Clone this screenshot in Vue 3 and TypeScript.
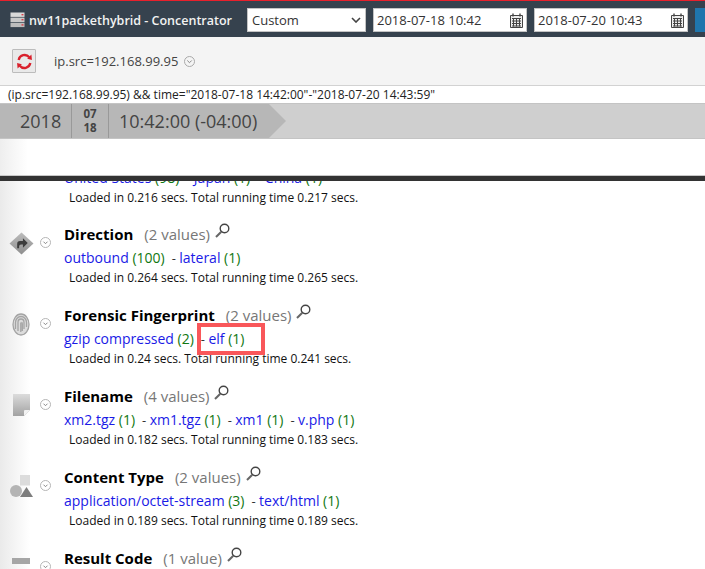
<script setup lang="ts">
interface Val { name: string; count: number }
interface Row { title: string; tail: string; icon: string; vals: Val[]; loaded: string; total: string }
const stub: Val[] = [{ name: 'United States', count: 98 }, { name: 'Japan', count: 1 }, { name: 'China', count: 1 }]
const rows: Row[] = [
  { title: 'Direction', tail: '(2 values)', icon: 'dir', vals: [{ name: 'outbound', count: 100 }, { name: 'lateral', count: 1 }], loaded: '0.264', total: '0.265' },
  { title: 'Forensic Fingerprint', tail: '(2 values)', icon: 'finger', vals: [{ name: 'gzip compressed', count: 2 }, { name: 'elf', count: 1 }], loaded: '0.24', total: '0.241' },
  { title: 'Filename', tail: '(4 values)', icon: 'file', vals: [{ name: 'xm2.tgz', count: 1 }, { name: 'xm1.tgz', count: 1 }, { name: 'xm1', count: 1 }, { name: 'v.php', count: 1 }], loaded: '0.182', total: '0.183' },
  { title: 'Content Type', tail: '(2 values)', icon: 'shapes', vals: [{ name: 'application/octet-stream', count: 3 }, { name: 'text/html', count: 1 }], loaded: '0.189', total: '0.189' },
  { title: 'Result Code', tail: '(1 value)', icon: 'bar', vals: [], loaded: '', total: '' },
]
</script>

<template>
  <div class="page">
    <header class="top">
      <svg class="srv" width="15" height="16" viewBox="0 0 15 16">
        <rect x="0.5" y="0.5" width="14" height="4.4" fill="#d9d9d9" />
        <rect x="0.5" y="5.6" width="14" height="4.4" fill="#c9c9c9" />
        <rect x="0.5" y="10.7" width="14" height="4.4" fill="#bdbdbd" />
        <rect x="11.5" y="2" width="2" height="1.4" fill="#d8404a" />
        <rect x="11.5" y="7" width="2" height="1.4" fill="#d8404a" />
        <rect x="11.5" y="12.2" width="2" height="1.4" fill="#d8404a" />
      </svg>
      <span class="brand">nw11packethybrid - Concentrator</span>
      <div class="field sel">
        <span>Custom</span>
        <svg width="10" height="6" viewBox="0 0 10 6"><path d="M1 1l4 4 4-4" fill="none" stroke="#444" stroke-width="1.6" /></svg>
      </div>
      <div class="field date">
        <span>2018-07-18 10:42</span>
        <svg width="13" height="15" viewBox="0 0 13 15"><path d="M.5 2.5h12v12H.5z" fill="#eee" stroke="#444" /><path d="M3 .5v3M10 .5v3" stroke="#444" stroke-width="1.4" /><path d="M2 5.5h9M2 8h9M2 10.5h9M2 13h9M3.5 5v8.5M6.5 5v8.5M9.5 5v8.5" stroke="#444" stroke-width="1" /></svg>
      </div>
      <div class="field date">
        <span>2018-07-20 10:43</span>
        <svg width="13" height="15" viewBox="0 0 13 15"><path d="M.5 2.5h12v12H.5z" fill="#eee" stroke="#444" /><path d="M3 .5v3M10 .5v3" stroke="#444" stroke-width="1.4" /><path d="M2 5.5h9M2 8h9M2 10.5h9M2 13h9M3.5 5v8.5M6.5 5v8.5M9.5 5v8.5" stroke="#444" stroke-width="1" /></svg>
      </div>
      <div class="go"></div>
    </header>

    <div class="tools">
      <button class="refresh">
        <svg width="17" height="17" viewBox="0 0 16 16">
          <path d="M2.5 6.5A5.7 5.7 0 0 1 12.5 4" fill="none" stroke="#d9202c" stroke-width="2.2" />
          <path d="M13.5 9.5A5.7 5.7 0 0 1 3.5 12" fill="none" stroke="#d9202c" stroke-width="2.2" />
          <path d="M10.5 5.5L15 6.5 14.5 1.5z" fill="#d9202c" />
          <path d="M5.5 10.5L1 9.5 1.5 14.5z" fill="#d9202c" />
        </svg>
      </button>
      <span class="crumb">ip.src=192.168.99.95</span>
      <svg class="chev" width="11" height="11" viewBox="0 0 11 11"><circle cx="5.5" cy="5.5" r="5" fill="#f4f4f4" stroke="#a9a9a9" /><path d="M3.3 4.5l2.2 2.2 2.2-2.2" fill="none" stroke="#888" /></svg>
    </div>

    <div class="query">(ip.src=192.168.99.95) &amp;&amp; time="2018-07-18 14:42:00"-"2018-07-20 14:43:59"</div>

    <div class="timeline">
      <div class="arrow">
        <span class="year">2018</span>
        <span class="md"><b>07</b><b>18</b></span>
        <span class="clock">10:42:00 (-04:00)</span>
      </div>
    </div>

    <div class="strip"></div>
    <div class="rule"></div>

    <main class="scroller">
      <div class="list">
        <div class="stub">
          <div class="vals">
            <template v-for="(v, i) in stub" :key="v.name"><em v-if="i">&nbsp;- </em><a>{{ v.name }}</a> <i>({{ v.count }})</i>&nbsp;</template>
          </div>
          <div class="load">Loaded in 0.216 secs. Total running time 0.217 secs.</div>
        </div>

        <section v-for="r in rows" :key="r.title" class="row">
          <div class="ico" :class="{ 'ico-bar': r.icon === 'bar' }">
            <svg v-if="r.icon === 'dir'" width="25" height="23" viewBox="0 0 26 24">
              <defs><linearGradient id="dg" x1="0" y1="0" x2="0" y2="1"><stop offset="0" stop-color="#bcbcbc" /><stop offset="1" stop-color="#8e8e8e" /></linearGradient></defs>
              <path d="M13 0.5L25.5 12 13 23.5 .5 12z" fill="url(#dg)" />
              <path d="M8.5 17v-4.5q0-3 3-3h3V6.5l5 5-5 5v-3.5h-2q-2 0-2 2V17z" fill="#3c3c3c" />
            </svg>
            <svg v-else-if="r.icon === 'finger'" width="18" height="23" viewBox="0 0 18 23" fill="none" stroke="#a4a4a4" stroke-width="1.3">
              <ellipse cx="9" cy="11.5" rx="8" ry="10.5" fill="#dcdcdc" />
              <path d="M3.5 16V9.5C3.5 6 6 3.5 9 3.5s5.5 2.5 5.5 6V14" />
              <path d="M6 18V9.5C6 7.5 7.3 6 9 6s3 1.5 3 3.500V16" />
              <path d="M8.8 19V9.5M9.5 9.5c.8 0 .8.5.8 1.5v7" />
            </svg>
            <svg v-else-if="r.icon === 'file'" width="17" height="22" viewBox="0 0 17 22">
              <defs><linearGradient id="fg" x1="0" y1="0" x2="0" y2="1"><stop offset="0" stop-color="#dcdcdc" /><stop offset="1" stop-color="#a2a2a2" /></linearGradient></defs>
              <path d="M0 0h17v16l-6 6H0z" fill="url(#fg)" />
              <path d="M17 16l-6 6v-5q0-1 1-1z" fill="#f2f2f2" />
            </svg>
            <svg v-else-if="r.icon === 'shapes'" width="23" height="22" viewBox="0 0 23 22">
              <rect x="10" y="0" width="10" height="10.5" fill="#dcdcdc" />
              <circle cx="6" cy="16" r="6" fill="#b4b4b4" />
              <path d="M10 22l6.5-10 6.5 10z" fill="#7d7d7d" />
            </svg>
            <svg v-else width="18" height="6" viewBox="0 0 18 6"><rect width="18" height="6" fill="#a6a6a6" /></svg>
          </div>
          <svg class="rchev" width="11" height="11" viewBox="0 0 11 11"><circle cx="5.5" cy="5.5" r="5" fill="#fff" stroke="#b5b5b5" /><path d="M3.5 4.7l2 2 2-2" fill="none" stroke="#888" /></svg>
          <div class="body">
            <h3 class="head">
              <span class="title">{{ r.title }}</span>
              <span class="tail">{{ r.tail }}</span>
              <svg class="lens" width="15" height="15" viewBox="0 0 15 15"><circle cx="9.5" cy="5.5" r="4.3" fill="#fff" stroke="#444" stroke-width="1.4" /><path d="M6.3 8.7L1 14" stroke="#666" stroke-width="2" /></svg>
            </h3>
            <div v-if="r.vals.length" class="vals">
              <template v-for="(v, i) in r.vals" :key="v.name"><em v-if="i">&nbsp;- </em><a>{{ v.name }}</a> <i>({{ v.count }})</i>&nbsp;</template>
            </div>
            <div v-if="r.loaded" class="load">Loaded in {{ r.loaded }} secs. Total running time {{ r.total }} secs.</div>
          </div>
        </section>
      </div>
      <div class="mark"></div>
    </main>
  </div>
</template>

<style scoped>
.page { width: 705px; height: 569px; overflow: hidden; display: flex; flex-direction: column; font-family: "Open Sans", sans-serif; background: #fff; color: #000; }
.top { flex: none; height: 34px; padding-top: 2px; border-top: 1px solid #e8202c; background: #36424e; display: flex; align-items: center; padding-left: 10px; box-sizing: content-box; }
.srv { flex: none; margin-right: 4px; }
.brand { flex: none; color: #f2f2f2; font-size: 12.5px; font-weight: 600; white-space: nowrap; width: 218px; }
.field { flex: none; height: 24px; box-sizing: border-box; background: #fff; border: 1px solid #c4c4c4; display: flex; align-items: center; justify-content: space-between; font-size: 13px; color: #333; padding: 0 3px; }
.sel { width: 119px; padding: 0 4px; }
.date { width: 154px; margin-left: 7px; }
.go { flex: none; width: 14px; height: 24px; margin-left: 7px; background: #1f76ad; }
.tools { flex: none; height: 48px; background: #f4f4f4; border-bottom: 1px solid #d2d2d2; display: flex; align-items: center; padding-left: 12px; }
.refresh { width: 24px; height: 24px; padding: 0; border: 1px solid #bcbcbc; background: #e9e9e9; border-radius: 1px; display: flex; align-items: center; justify-content: center; }
.crumb { font-size: 13px; color: #444; margin-left: 18px; }
.chev { margin-left: 6px; }
.query { flex: none; height: 17px; line-height: 17px; font-size: 12px; padding-left: 8px; color: #222; white-space: nowrap; }
.timeline { flex: none; height: 36px; background: #cfcfcf; border-top: 1px solid #c4c4c4; border-bottom: 1px solid #c4c4c4; box-sizing: border-box; }
.arrow { height: 100%; width: 286px; background: #b7b7b7; clip-path: polygon(0 0, 269px 0, 286px 50%, 269px 100%, 0 100%); display: flex; color: #444; }
.year { width: 72px; box-sizing: border-box; padding-left: 20px; font-size: 18px; line-height: 34px; border-right: 1px solid #999; }
.md { width: 36px; border-right: 1px solid #999; display: flex; flex-direction: column; align-items: center; justify-content: center; font-size: 11.5px; line-height: 14px; }
.md b { font-weight: 700; }
.clock { padding-left: 10px; font-size: 18px; line-height: 34px; white-space: nowrap; }
.strip { flex: none; height: 37px; background: linear-gradient(90deg, #eee, #fff 28px); border-bottom: 1px solid #c8c8c8; box-sizing: border-box; }
.rule { flex: none; height: 5px; background: #333; }
.scroller { flex: 1; min-height: 0; overflow: hidden; position: relative; background: linear-gradient(90deg, #eaeaea, #fff 30px); }
.list { margin-top: -15px; }
.stub { padding-left: 64px; height: 51px; }
.row { display: flex; height: 81px; }
.ico { width: 36px; margin-left: 3px; height: 52px; flex: none; display: flex; align-items: center; justify-content: center; }
.ico-bar { height: 40px; }
.rchev { flex: none; margin: 20px 0 0 1px; }
.body { margin-left: 13px; }
.head { margin: 6px 0 0; height: 23px; display: flex; align-items: center; font-size: 14px; line-height: 23px; font-weight: 400; white-space: nowrap; }
.title { font-size: 15px; font-weight: 700; color: #000; }
.tail { font-size: 15px; color: #777; margin-left: 11px; }
.lens { margin: -8px 0 0 5px; }
.vals { font-size: 14px; line-height: 24px; white-space: pre-wrap; color: #444; }
.vals a { color: #1a1ae6; }
.vals i { font-style: normal; color: #117711; }
.vals em { font-style: normal; color: #333; font-size: 13px; }
.load { font-size: 12px; line-height: 14px; margin-top: 1px; padding-left: 5px; color: #111; white-space: nowrap; }
.mark { position: absolute; left: 197px; top: 142px; width: 68px; height: 32px; box-sizing: border-box; border: 4px solid #f9575a; }
</style>
